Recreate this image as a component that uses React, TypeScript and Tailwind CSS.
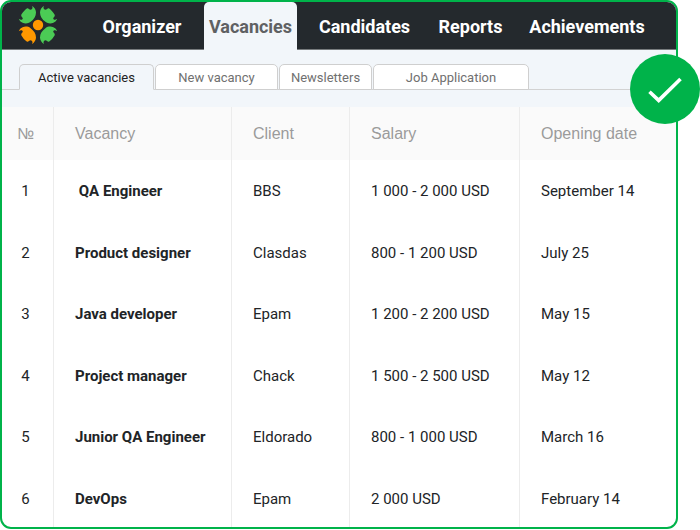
import clsx from 'clsx';

interface Vacancy {
  title: string;
  client: string;
  salary: string;
  date: string;
}

const sections = [
  { name: 'Organizer', width: 'w-[124px]' },
  { name: 'Vacancies', width: 'w-[93px]' },
  { name: 'Candidates', width: 'w-[135px]' },
  { name: 'Reports', width: 'w-[77px]' },
  { name: 'Achievements', width: 'w-[156px]' },
];

const tabs = [
  { name: 'Active vacancies', width: 'w-[135px]' },
  { name: 'New vacancy', width: 'w-[123px]' },
  { name: 'Newsletters', width: 'w-[93px]' },
  { name: 'Job Application', width: 'w-[156px]' },
];

const vacancies: Vacancy[] = [
  { title: 'QA Engineer', client: 'BBS', salary: '1 000 - 2 000 USD', date: 'September 14' },
  { title: 'Product designer', client: 'Clasdas', salary: '800 - 1 200 USD', date: 'July 25' },
  { title: 'Java developer', client: 'Epam', salary: '1 200 - 2 200 USD', date: 'May 15' },
  { title: 'Project manager', client: 'Chack', salary: '1 500 - 2 500 USD', date: 'May 12' },
  { title: 'Junior QA Engineer', client: 'Eldorado', salary: '800 - 1 000 USD', date: 'March 16' },
  { title: 'DevOps', client: 'Epam', salary: '2 000 USD', date: 'February 14' },
];

const petal =
  'M6 -19.3C3.4 -17.6 2 -15 2 -12.6C2 -8.6 4.2 -5.6 7.4 -3.2C10 -1.2 13 -1.3 15.4 -2.2C17.2 -3 18.6 -4.2 19.2 -6.2C17.4 -4.8 15.6 -5 15.2 -6.6C15.2 -7.8 17 -8.2 16.8 -9.8C16.6 -11.4 12.8 -15.6 11.2 -16.6C9.6 -17.4 9 -15.2 7.4 -15.2C5.4 -15.4 5 -17.6 6 -19.3Z';

function Logo() {
  return (
    <svg viewBox="-20 -20 40 40" className="size-10" aria-hidden="true">
      <path d={petal} fill="#4bcb55" />
      <path d={petal} fill="#4bcb55" transform="scale(-1 1)" />
      <path d={petal} fill="#ff9800" transform="scale(-1 -1)" />
      <path d={petal} fill="#4bcb55" transform="scale(1 -1)" />
      <circle r="5.2" fill="#ff9800" />
    </svg>
  );
}

function TopNav() {
  return (
    <nav className="flex h-12 border-b border-[#777b7d] bg-[#24292d] pl-4">
      <a href="#home" aria-label="Home" className="w-[62px] pt-[3px]">
        <Logo />
      </a>
      {sections.map(({ name, width }) => (
        <a
          key={name}
          href="#section"
          className={clsx(
            'shrink-0 text-center text-lg leading-[49px] font-bold',
            width,
            name === 'Vacancies'
              ? '-mb-px rounded-t-[5px] bg-[#f2f6fa] text-[#5f6163]'
              : 'text-white',
          )}
        >
          {name}
        </a>
      ))}
    </nav>
  );
}

function Tabs() {
  return (
    <div className="flex h-[57px] flex-col bg-[#f2f6fa] pt-3.5">
      <div role="tablist" className="flex h-[26px] gap-px border-b border-[#d2d2d2] pl-[17px]">
        {tabs.map(({ name, width }, i) => (
          <button
            key={name}
            type="button"
            role="tab"
            aria-selected={i === 0}
            className={clsx(
              'h-[26px] shrink-0 rounded-t-[5px] border border-[#cfcfcf] pt-px text-[13px] leading-6',
              width,
              i === 0 ? 'border-b-[#f2f6fa] bg-[#f2f6fa] text-[#222]' : 'bg-white text-[#707070]',
            )}
          >
            {name}
          </button>
        ))}
      </div>
    </div>
  );
}

function VacancyTable() {
  const cell = 'border-l border-[#ececec] py-0 pr-0 pl-[21px]';

  return (
    <table className="-mb-0.5 w-full table-fixed border-separate border-spacing-0 text-left text-[15px] leading-6 text-[#212427]">
      <colgroup>
        <col className="w-[51px]" />
        <col className="w-[178px]" />
        <col className="w-[118px]" />
        <col className="w-[170px]" />
        <col />
      </colgroup>
      <thead>
        <tr className="h-[53px] bg-[#fafafa] font-['Liberation_Sans',Arial,sans-serif] text-base text-[#9b9b9b]">
          <th className="py-0 pr-1 pl-0 text-center font-normal">№</th>
          <th className={clsx(cell, 'font-normal')}>Vacancy</th>
          <th className={clsx(cell, 'font-normal')}>Client</th>
          <th className={clsx(cell, 'font-normal')}>Salary</th>
          <th className={clsx(cell, 'font-normal')}>Opening date</th>
        </tr>
      </thead>
      <tbody>
        {vacancies.map(({ title, client, salary, date }, i) => (
          <tr key={title} className="odd:h-[62px] even:h-[61px]">
            <td className="py-0 pr-1 pl-0 text-center">{i + 1}</td>
            <td className={clsx(cell, 'font-bold whitespace-pre')}>{i === 0 ? ` ${title}` : title}</td>
            <td className={cell}>{client}</td>
            <td className={cell}>{salary}</td>
            <td className={cell}>{date}</td>
          </tr>
        ))}
      </tbody>
    </table>
  );
}

export default function App() {
  return (
    <div className="min-h-screen bg-white pr-[22px] font-[Roboto,sans-serif]">
      <main className="relative">
        <div className="overflow-hidden rounded-[11px] border-2 border-[#00b34a] bg-white">
          <TopNav />
          <Tabs />
          <VacancyTable />
        </div>
        <div className="absolute top-[54px] -right-[22px] flex size-[70px] items-center justify-center rounded-full bg-[#00b34a]">
          <svg viewBox="0 0 34 28" className="h-7 w-[34px]" fill="none" aria-hidden="true">
            <path d="M1.5 16.8L10.7 25.4L32.5 4" stroke="#fff" strokeWidth="3.6" />
          </svg>
        </div>
      </main>
    </div>
  );
}
